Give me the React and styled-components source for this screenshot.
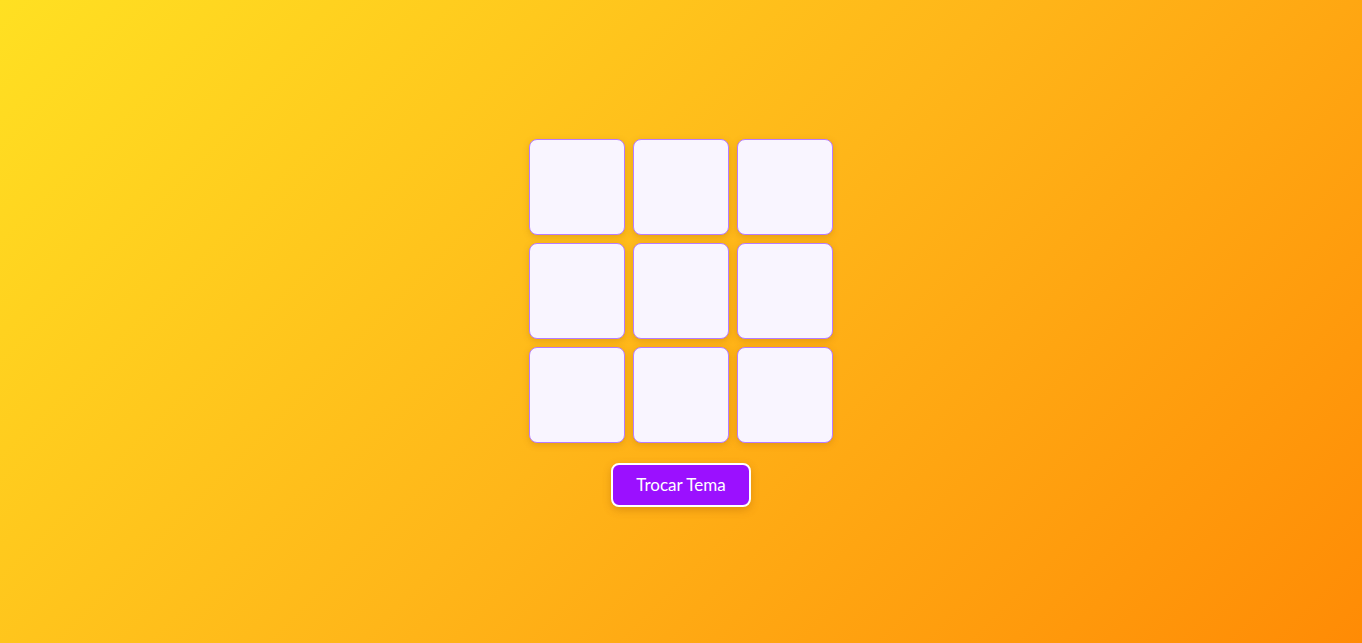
import React from 'react'
import styled, { createGlobalStyle } from 'styled-components'

const GlobalStyle = createGlobalStyle`
  html, body {
    margin: 0;
    padding: 0;
    height: 100%;
  }
  body {
    font-family: Lato, "Open Sans", sans-serif;
  }
`

const Page = styled.div`
  box-sizing: border-box;
  min-height: 100vh;
  padding-top: 2px;
  display: flex;
  flex-direction: column;
  align-items: center;
  justify-content: center;
  gap: 20px;
  background: linear-gradient(135deg, #ffe022 0%, #ffb619 50%, #ff8b05 100%);
`

const Board = styled.div`
  display: grid;
  grid-template-columns: repeat(3, 96px);
  grid-auto-rows: 96px;
  gap: 8px;
`

const Cell = styled.button`
  box-sizing: border-box;
  width: 96px;
  height: 96px;
  padding: 0;
  background: #f9f5ff;
  border: 1px solid #b77cff;
  border-radius: 8px;
  box-shadow: 0 2px 6px rgba(150, 90, 0, 0.25);
  cursor: pointer;
`

const ThemeButton = styled.button`
  box-sizing: border-box;
  width: 140px;
  height: 44px;
  background: #9b10ff;
  color: #ffffff;
  border: 2px solid #ffffff;
  border-radius: 8px;
  font-family: Lato, "Open Sans", sans-serif;
  font-size: 17px;
  box-shadow: 0 3px 8px rgba(150, 80, 0, 0.3);
  cursor: pointer;
`

export default function App() {
  const cells = Array.from({ length: 9 })
  return (
    <>
      <GlobalStyle />
      <Page>
        <Board>
          {cells.map((_, i) => (
            <Cell key={i} />
          ))}
        </Board>
        <ThemeButton>Trocar Tema</ThemeButton>
      </Page>
    </>
  )
}
